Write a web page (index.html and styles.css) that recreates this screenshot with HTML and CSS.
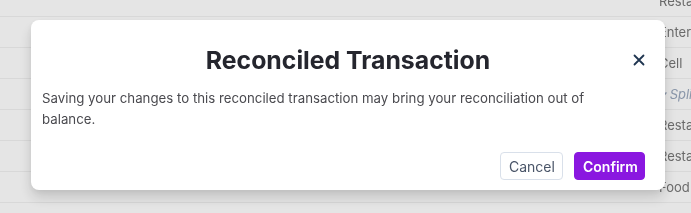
FILE: index.html
```html
<!DOCTYPE html>
<html lang="en">
<head>
<meta charset="utf-8">
<title>Reconciled Transaction</title>
<link rel="stylesheet" href="styles.css">
</head>
<body>
<div class="table">
  <div class="row"><span class="cell">Restaurants</span></div>
  <div class="row"><span class="cell">Entertainment</span></div>
  <div class="row"><span class="cell">Cell</span></div>
  <div class="row"><span class="cell split">&#9662; Split</span></div>
  <div class="row"><span class="cell">Restaurants</span></div>
  <div class="row"><span class="cell">Restaurants</span></div>
  <div class="row"><span class="cell">Food</span></div>
</div>
<div class="overlay">
  <div class="modal" role="dialog" aria-labelledby="mtitle">
    <div class="modal-header">
      <h2 class="modal-title" id="mtitle">Reconciled Transaction</h2>
      <button class="close" aria-label="Close">
        <svg width="12" height="12" viewBox="0 0 12 12"><path d="M1.5 1.5 L10.5 10.5 M10.5 1.5 L1.5 10.5" stroke="#1f3550" stroke-width="1.8" stroke-linecap="round"/></svg>
      </button>
    </div>
    <p class="modal-body">Saving your changes to this reconciled transaction may bring your reconciliation out of balance.</p>
    <div class="modal-footer">
      <button class="btn btn-cancel">Cancel</button>
      <button class="btn btn-confirm">Confirm</button>
    </div>
  </div>
</div>
</body>
</html>
```

FILE: styles.css
```css
html, body {
  margin: 0;
  padding: 0;
  height: 100%;
  overflow: hidden;
}
body {
  background: #ffffff;
  font-family: Inter, "Noto Sans", sans-serif;
}
.table {
  margin-top: -14px;
  filter: blur(0.7px);
}
.row {
  height: 30px;
  border-bottom: 1px solid #f1f1f1;
  display: flex;
  align-items: center;
  padding-left: 659px;
}
.cell {
  width: 32px;
  overflow: hidden;
  font-size: 13px;
  color: #777;
  white-space: nowrap;
}
.cell.split {
  color: #9aa8bd;
  font-style: italic;
}
.overlay {
  position: fixed;
  inset: 0;
  background: rgba(0, 0, 0, 0.1);
  padding: 20px 0 0 31px;
}
.modal {
  width: 634px;
  height: 170px;
  box-sizing: border-box;
  background: #fff;
  border-radius: 8px;
  box-shadow: 0 8px 14px rgba(0, 0, 0, 0.14), 0 2px 6px rgba(0, 0, 0, 0.06);
  padding: 24px 20px 10px 11px;
  display: flex;
  flex-direction: column;
}
.modal-header {
  position: relative;
  display: flex;
  justify-content: center;
  align-items: center;
  height: 32px;
}
.modal-title {
  margin: 0;
  font-size: 24.8px;
  line-height: 32px;
  font-weight: 700;
  color: #25262e;
  padding-left: 9px;
}
.close {
  position: absolute;
  right: 0;
  top: 50%;
  transform: translateY(-50%);
  width: 20px;
  height: 20px;
  margin-right: -4px;
  border: 0;
  background: none;
  padding: 0;
  display: flex;
  align-items: center;
  justify-content: center;
}
.modal-body {
  margin: 12px 0 0;
  max-width: 560px;
  font-size: 13.25px;
  line-height: 21px;
  color: #4a4a4f;
}
.modal-footer {
  margin-top: auto;
  display: flex;
  justify-content: flex-end;
  gap: 11px;
}
.btn {
  height: 28px;
  box-sizing: border-box;
  border-radius: 4px;
  font-family: Inter, "Noto Sans", sans-serif;
  font-size: 14px;
  padding: 0 8px;
}
.btn-cancel {
  width: 63px;
  background: #fff;
  border: 1px solid #d9e0ea;
  color: #4a5568;
}
.btn-confirm {
  width: 71px;
  background: #8a17e0;
  border: 1px solid #8a17e0;
  color: #fff;
  font-weight: 600;
}
```
